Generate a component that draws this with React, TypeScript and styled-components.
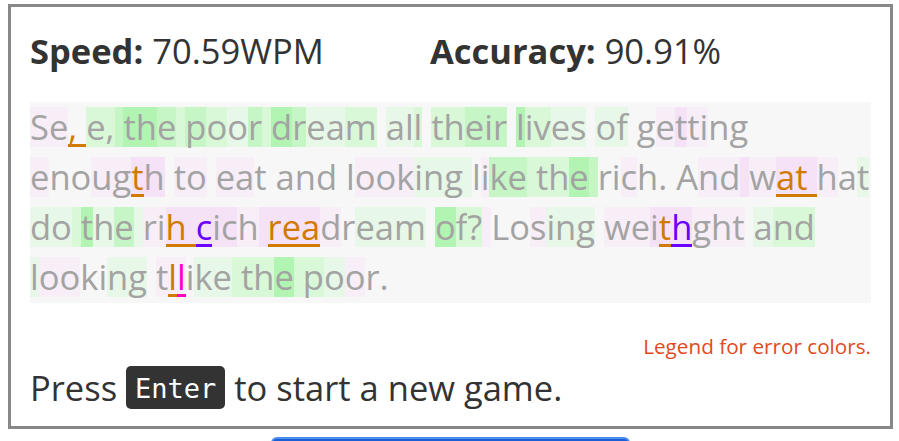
import React from "react";
import styled, { createGlobalStyle } from "styled-components";

const GlobalStyle = createGlobalStyle`
  html, body { margin: 0; padding: 0; background: #ffffff; }
  body { font-family: "Open Sans", "Noto Sans", sans-serif; }
`;

const BG: Record<string, string> = {
  ".": "transparent",
  p: "#f8eef8",
  P: "#f6e2f6",
  g: "#e8f8e8",
  G: "#d8f8d8",
  h: "#c6f6c6",
  H: "#b2f4b2",
};

const ERR: Record<string, string> = {
  o: "#d17a00",
  v: "#6a00ff",
  m: "#ff00cc",
};

type Line = { text: string; bg: string; err: string };

const LINES: Line[] = [
  {
    text: "Se, e, the poor dream all their lives of getting",
    bg: "pp..GGhHHhGhGghGHhggG.ggG.GGhhh.HGGgg.gg..pPpp..",
    err: "..oo............................................",
  },
  {
    text: "enougth to eat and looking like the rich. And wat hat",
    bg: "p..ppPP.pp.pp.......pppgggg.phhGGGHh..p....ppPpPPPp.gG",
    err: ".....o.........................................ooo...",
  },
  {
    text: "do the rih cich readream of? Losing weithght and",
    bg: "ggGHghgppPPPPPpPPPPp.ggg.HGGp..pggg.ppPPPppp.gGG",
    err: ".........oov....ooo....................ov.......",
  },
  {
    text: "looking tllike the poor.",
    bg: "gpp..gg.ppp.ggGGGHGGgp..",
    err: ".........om..............",
  },
];

const Page = styled.div`
  padding: 4px 6px 0 8px;
`;

const Card = styled.div`
  border: 3px solid #888888;
  padding: 0 19px 17px 19px;
  color: #333333;
`;

const StatsRow = styled.div`
  display: grid;
  grid-template-columns: 400px 1fr;
  padding-top: 24px;
  height: 40px;
  line-height: 40px;
  font-size: 34.5px;
  margin-bottom: 31px;
`;

const Stat = styled.div`
  white-space: nowrap;
`;

const StatLabel = styled.span`
  font-weight: 700;
`;

const TextBox = styled.div`
  background: #f7f7f7;
  display: flex;
  flex-direction: column;
  padding-bottom: 1px;
`;

const TextLine = styled.div`
  height: 50px;
  display: flex;
  align-items: center;
  white-space: pre;
  font-size: 34.5px;
`;

const Char = styled.span<{ $bg: string; $err?: string }>`
  display: inline-block;
  height: 40px;
  line-height: 40px;
  background: ${(p) => p.$bg};
  color: ${(p) => p.$err || "#a3a3a3"};
  box-shadow: ${(p) => (p.$err ? `inset 0 -3px 0 0 ${p.$err}` : "none")};
`;

const Legend = styled.div`
  margin-top: 31px;
  text-align: right;
  font-size: 20.7px;
  line-height: 24px;
  color: #e04a1c;
`;

const PressRow = styled.div`
  margin-top: 7px;
  display: flex;
  align-items: center;
  height: 44px;
  font-size: 34.5px;
  white-space: pre;
  color: #333333;
`;

const Kbd = styled.kbd`
  display: inline-flex;
  align-items: center;
  height: 43px;
  padding: 2px 9px 0;
  box-sizing: border-box;
  border-radius: 5px;
  background: #333333;
  color: #ffffff;
  font-family: "DejaVu Sans Mono", "Liberation Mono", monospace;
  font-size: 27px;
`;

const NewGameButton = styled.button`
  display: block;
  margin: 8px auto 0;
  width: 359px;
  height: 40px;
  border: 2px solid #4b8ef0;
  border-radius: 6px;
  background: #1a5fd6;
`;

export default function App() {
  return (
    <>
      <GlobalStyle />
      <Page>
        <Card>
          <StatsRow>
            <Stat>
              <StatLabel>Speed:</StatLabel> 70.59WPM
            </Stat>
            <Stat>
              <StatLabel>Accuracy:</StatLabel> 90.91%
            </Stat>
          </StatsRow>
          <TextBox>
            {LINES.map((line, li) => (
              <TextLine key={li}>
                {line.text.split("").map((ch, ci) => (
                  <Char key={ci} $bg={BG[line.bg[ci]] || "transparent"} $err={ERR[line.err[ci]]}>
                    {ch}
                  </Char>
                ))}
              </TextLine>
            ))}
          </TextBox>
          <Legend>Legend for error colors.</Legend>
          <PressRow>
            Press <Kbd>Enter</Kbd> to start a new game.
          </PressRow>
        </Card>
        <NewGameButton aria-label="New game" />
      </Page>
    </>
  );
}
